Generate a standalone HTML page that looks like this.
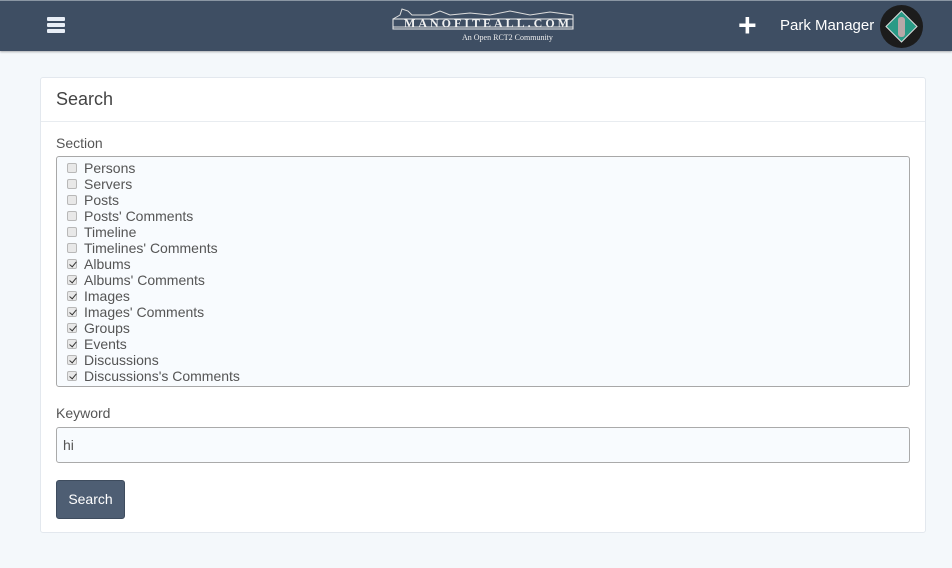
<!DOCTYPE html>
<html><head><meta charset="utf-8"><style>
*{box-sizing:border-box}
body{margin:0;width:952px;height:568px;background:#f4f8fb;font-family:"Liberation Sans",sans-serif;color:#555;overflow:hidden;position:relative}
.nav{position:absolute;left:0;top:0;width:952px;height:51px;background:#3e4e63;border-top:1px solid #8a96a3;box-shadow:0 1px 2px rgba(0,0,0,.3)}
.burger{position:absolute;left:47px;top:16px;width:18px}
.burger i{display:block;height:4px;background:#e8eef6;margin-bottom:2px;border-radius:1px}
.plus{position:absolute;left:738px;top:11px;color:#fff;font-size:32px;font-weight:bold;line-height:26px}
.pm{position:absolute;left:780px;top:16px;color:#fff;font-size:15px}
.av{position:absolute;left:880px;top:4px;width:43px;height:43px;border-radius:50%;background:#1c1c1c;overflow:hidden}
.logo{position:absolute;left:390px;top:4px;width:186px;height:40px;color:#e6e6e6;font-family:"Liberation Serif",serif}
.panel{position:absolute;left:40px;top:77px;width:886px;height:456px;background:#fff;border:1px solid #e3e8ee;border-radius:3px}
.ph{height:44px;border-bottom:1px solid #e8ecf0;padding:11px 15px;font-size:18px;color:#444}
label{position:absolute;left:15px;font-size:14px;color:#555}
.sel{position:absolute;left:15px;top:78px;width:854px;height:231px;border:1px solid #a8a8a8;border-radius:3px;background:#f8fbfe;padding-top:3px}
.row{height:16px;line-height:16px;font-size:14px;color:#555;padding-left:27px;position:relative}
.row b{position:absolute;left:10px;top:3px;width:10px;height:10px;border:1px solid #b8b8b8;border-radius:2px;background:#e8e8e8}
.row b.c::after{content:"";position:absolute;left:2.5px;top:0px;width:3px;height:6px;border:solid #333;border-width:0 1.5px 1.5px 0;transform:rotate(40deg)}
.inp{position:absolute;left:15px;top:349px;width:854px;height:36px;border:1px solid #aaa;border-radius:3px;background:#f8fbfe;padding:9px 6px;font-size:14px;color:#555}
.btn{position:absolute;left:15px;top:402px;width:69px;height:39px;background:#4e5e73;border:1px solid #3e4c5e;border-radius:3px;color:#fff;font-size:14px;text-align:center;line-height:37px}
</style></head><body>
<div class="nav">
<div class="burger"><i></i><i></i><i></i></div>
<div class="logo">
<svg width="186" height="26" style="position:absolute;left:0;top:0"><path d="M3 22 L3 14 L10 10 L12 4 L18 6 L22 10 L40 10 L50 6 L60 10 L80 8 L100 10 L120 6 L140 10 L160 7 L183 10 L183 22 Z" fill="none" stroke="#ddd" stroke-width="1"/><rect x="3" y="14" width="180" height="10" fill="none" stroke="#eee"/></svg>
<div style="position:absolute;left:14px;top:11px;font-size:12px;letter-spacing:3px;font-weight:bold;color:#f0f0f0">MANOFITEALL.COM</div>
<div style="position:absolute;left:72px;top:28px;font-size:8px;color:#eee">An Open RCT2 Community</div>
</div>
<div class="plus">+</div>
<div class="pm">Park Manager</div>
<div class="av"><svg width="43" height="43"><polygon points="21.5,6 37,21.5 21.5,37 6,21.5" fill="#2a9a86" stroke="#ddd" stroke-width="1"/><rect x="18" y="12" width="7" height="20" rx="3" fill="#b8a8a8"/></svg></div>
</div>
<div class="panel">
<div class="ph">Search</div>
<label style="top:57px">Section</label>
<div class="sel">
<div class="row"><b></b>Persons</div>
<div class="row"><b></b>Servers</div>
<div class="row"><b></b>Posts</div>
<div class="row"><b></b>Posts' Comments</div>
<div class="row"><b></b>Timeline</div>
<div class="row"><b></b>Timelines' Comments</div>
<div class="row"><b class="c"></b>Albums</div>
<div class="row"><b class="c"></b>Albums' Comments</div>
<div class="row"><b class="c"></b>Images</div>
<div class="row"><b class="c"></b>Images' Comments</div>
<div class="row"><b class="c"></b>Groups</div>
<div class="row"><b class="c"></b>Events</div>
<div class="row"><b class="c"></b>Discussions</div>
<div class="row"><b class="c"></b>Discussions's Comments</div>
</div>
<label style="top:327px">Keyword</label>
<div class="inp">hi</div>
<div class="btn">Search</div>
</div>
</body></html>
